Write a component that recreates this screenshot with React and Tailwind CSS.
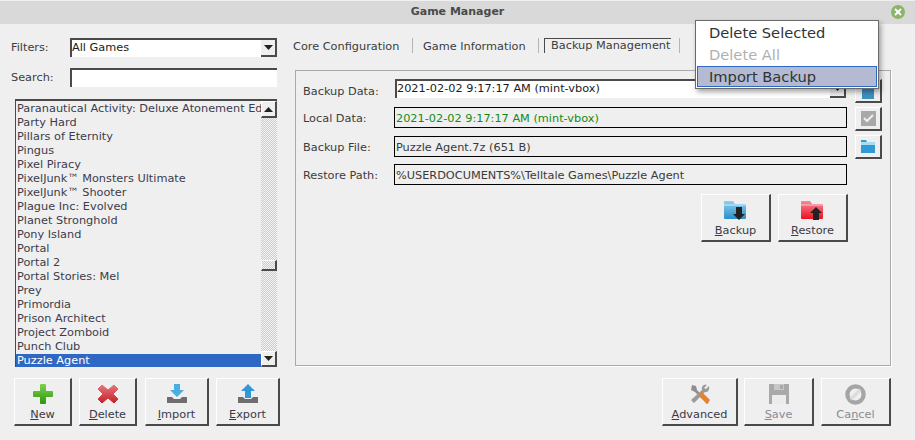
import { Fragment } from "react";

const games = [
  "Paranautical Activity: Deluxe Atonement Edition",
  "Party Hard",
  "Pillars of Eternity",
  "Pingus",
  "Pixel Piracy",
  "PixelJunk™ Monsters Ultimate",
  "PixelJunk™ Shooter",
  "Plague Inc: Evolved",
  "Planet Stronghold",
  "Pony Island",
  "Portal",
  "Portal 2",
  "Portal Stories: Mel",
  "Prey",
  "Primordia",
  "Prison Architect",
  "Project Zomboid",
  "Punch Club",
  "Puzzle Agent",
];

const bevel = "border-t border-l border-t-white border-l-white border-b-2 border-r-2 border-b-[#4a4a4a] border-r-[#4a4a4a]";

function Arrow({ up }) {
  return (
    <svg width="9" height="5" viewBox="0 0 9 5">
      <path d={up ? "M4.5 0L9 5H0z" : "M0 0H9L4.5 5z"} fill="#222" />
    </svg>
  );
}

function Folder({ id, from, to, tab, children }) {
  return (
    <svg width="23" height="21" viewBox="0 0 23 21">
      <defs>
        <linearGradient id={id} x1="0" y1="0" x2="0" y2="1">
          <stop offset="0" stopColor={from} />
          <stop offset="1" stopColor={to} />
        </linearGradient>
      </defs>
      <path d="M1 1h8l2 3h10a1 1 0 0 1 1 1v13a1 1 0 0 1-1 1H1a1 1 0 0 1-1-1V2a1 1 0 0 1 1-1z" fill={`url(#${id})`} />
      <path d="M0 5h22" stroke={tab} strokeWidth="1" />
      {children}
    </svg>
  );
}

const icons = {
  New: (
    <svg width="20" height="20" viewBox="0 0 20 20">
      <defs>
        <linearGradient id="plus" x1="0" y1="0" x2="0" y2="1">
          <stop offset="0" stopColor="#7fd04f" />
          <stop offset="1" stopColor="#2c980c" />
        </linearGradient>
      </defs>
      <path d="M7 1a1 1 0 0 1 1-1h4a1 1 0 0 1 1 1v6h6a1 1 0 0 1 1 1v4a1 1 0 0 1-1 1h-6v6a1 1 0 0 1-1 1H8a1 1 0 0 1-1-1v-6H1a1 1 0 0 1-1-1V8a1 1 0 0 1 1-1h6z" fill="url(#plus)" />
    </svg>
  ),
  Delete: (
    <svg width="20" height="20" viewBox="0 0 20 20">
      <defs>
        <linearGradient id="cross" x1="0" y1="0" x2="0" y2="1">
          <stop offset="0" stopColor="#e8747c" />
          <stop offset="1" stopColor="#c0242a" />
        </linearGradient>
      </defs>
      <path d="M4 1l6 5 6-5 4 4-5 5 5 5-4 4-6-5-6 5-4-4 5-5-5-5z" fill="url(#cross)" stroke="url(#cross)" strokeLinejoin="round" />
    </svg>
  ),
  Import: (
    <svg width="20" height="20" viewBox="0 0 20 20">
      <path d="M0 13h5l2 2h6l2-2h5v6H0z" fill="#6e6e6e" />
      <path d="M7 0h6v6h4l-7 7-7-7h4z" fill="#4aaee0" />
    </svg>
  ),
  Export: (
    <svg width="20" height="20" viewBox="0 0 20 20">
      <path d="M0 13h5l2 2h6l2-2h5v6H0z" fill="#6e6e6e" />
      <path d="M10 0l7 7h-4v7H7V7H3z" fill="#3098d8" />
    </svg>
  ),
  Advanced: (
    <svg width="22" height="22" viewBox="0 0 22 22">
      <path d="M3 2l4 1 1 4 12 12-2 2L6 9 2 7z" fill="#8f8f8f" />
      <path d="M20 3l-3 3-2-1 3-3c-3-1-6 1-5 5L2 17l3 3L16 9c3 1 5-3 4-6z" fill="#9a9a9a" />
      <path d="M10 12l3-3 8 8-3 4z" fill="#e8822a" />
    </svg>
  ),
  Save: (
    <svg width="20" height="20" viewBox="0 0 20 20">
      <path d="M0 0h20v20H0z" fill="#a9a9a9" />
      <path d="M3 11h14v9H3z" fill="#ececec" />
      <path d="M5 0h10v6H5z" fill="#c8c8c8" />
      <path d="M11 1h3v4h-3z" fill="#a9a9a9" />
    </svg>
  ),
  Cancel: (
    <svg width="21" height="21" viewBox="0 0 22 22">
      <circle cx="11" cy="11" r="8.5" fill="none" stroke="#a5a5a5" strokeWidth="4.5" />
      <path d="M6 16L16 6" stroke="#dcdcdc" strokeWidth="3.5" />
    </svg>
  ),
  Backup: (
    <Folder id="bk" from="#8fd0ee" to="#2a8ecb" tab="#cdeaf8">
      <path d="M12 7h6v7h3l-6 6-6-6h3z" fill="#222" />
    </Folder>
  ),
  Restore: (
    <Folder id="rs" from="#f58a9a" to="#ee1020" tab="#fbc8d0">
      <path d="M15 7l6 6h-3v7h-6v-7H9z" fill="#222" />
    </Folder>
  ),
};

function Btn({ name, w, disabled }) {
  return (
    <button className={`${bevel} ${w} h-[48px] flex flex-col items-center justify-start pt-[3px] shrink-0`}>
      <span className="h-[24px] flex items-center justify-center">{icons[name]}</span>
      <span className={`leading-[14px] mt-[2px] ${disabled ? "text-[#8a8a94]" : "text-[#3a3a48]"}`}>
        {name === "Cancel" ? (
          <Fragment>Ca<span className="underline">n</span>cel</Fragment>
        ) : (
          <Fragment><span className="underline">{name[0]}</span>{name.slice(1)}</Fragment>
        )}
      </span>
    </button>
  );
}

function SmallBtn({ children }) {
  return <div className={`${bevel} w-[27px] h-[24px] flex items-center justify-center shrink-0`}>{children}</div>;
}

function Field({ label, green, value }) {
  return (
    <Fragment>
      <span className="w-[91px] pt-[3px] leading-[18px] text-[#3c3c3c]">{label}</span>
      <div className={`w-[453px] h-[21px] border border-black pl-[1px] leading-[21px] truncate ${green ? "text-[#148a14]" : "text-[#3a3a3a]"}`}>
        {value}
      </div>
    </Fragment>
  );
}

function Scrollbar() {
  return (
    <div className="w-[16px] flex flex-col shrink-0 bg-[repeating-conic-gradient(#cccccc_0%_25%,#f4f4f4_0%_50%)] bg-[length:2px_2px]">
      <div className={`${bevel} h-[17px] bg-[#efefef] flex items-center justify-center`}><Arrow up /></div>
      <div className="h-[142px]" />
      <div className={`${bevel} h-[11px]`} />
      <div className="flex-1" />
      <div className={`${bevel} h-[16px] bg-[#efefef] flex items-center justify-center`}><Arrow /></div>
    </div>
  );
}

export default function App() {
  return (
    <div className="relative w-[915px] h-[440px] overflow-hidden bg-[#efefef] text-[11.3px] text-[#3c3c3c] font-['DejaVu_Sans',sans-serif]">
      <div className="relative h-[24px] bg-[#d9d9d9] border-t border-t-[#f0f0f0] flex items-center justify-center">
        <span className="text-[11px] font-bold text-[#4a4a4a]">Game Manager</span>
        <span className="absolute left-[891px] top-[4px] w-[14px] h-[14px] rounded-full bg-[#8ab56b] flex items-center justify-center">
          <svg width="8" height="8" viewBox="0 0 8 8">
            <path d="M1 1l6 6M7 1L1 7" stroke="#fff" strokeWidth="1.8" />
          </svg>
        </span>
      </div>

      <div className="flex h-[416px]">
        {/* left column */}
        <div className="w-[293px] pl-[11px] pt-[14px] flex flex-col shrink-0">
          <div className="flex items-center h-[19px]">
            <span className="w-[59px] pt-[1px]">Filters:</span>
            <div className="w-[207px] h-[19px] bg-white border-t-2 border-l-2 border-[#4a4a4a] flex justify-between">
              <span className="text-[#1c1c1c] leading-[16px]">All Games</span>
              <div className="w-[16px] h-[17px] bg-[#efefef] border-r-2 border-b-2 border-[#4a4a4a] flex items-center justify-center"><Arrow /></div>
            </div>
          </div>
          <div className="flex items-center h-[19px] mt-[11px]">
            <span className="w-[59px] pt-[1px]">Search:</span>
            <div className="w-[207px] h-[19px] bg-white border-t-2 border-l-2 border-[#4a4a4a]" />
          </div>
          <div className="ml-[4px] mt-[12px] w-[262px] h-[268px] flex border-t-2 border-l border-[#4a4a4a] bg-[#efefef]">
            <div className="flex-1 min-w-0 overflow-hidden pt-[1px]">
              {games.map((g) => (
                <div
                  key={g}
                  className={`h-[14px] leading-[14px] whitespace-nowrap pl-[1px] ${g === "Puzzle Agent" ? "bg-[#2f67c4] text-white" : "text-[#3c3c4c]"}`}
                >
                  {g}
                </div>
              ))}
            </div>
            <Scrollbar />
          </div>
          <div className="flex mt-[11px] ml-[3px]">
            <Btn name="New" w="w-[58px]" />
            <div className="ml-[7px]"><Btn name="Delete" w="w-[58px]" /></div>
            <div className="ml-[8px]"><Btn name="Import" w="w-[64px]" /></div>
            <div className="ml-[7px]"><Btn name="Export" w="w-[64px]" /></div>
          </div>
        </div>

        {/* right column */}
        <div className="flex-1 pt-[14px] flex flex-col min-w-0">
          <div className="flex items-center h-[15px] text-[#3c3c3c]">
            <span className="w-[119px] pt-[3px]">Core Configuration</span>
            <span className="w-px h-[15px] bg-[#b4b4b4]" />
            <span className="ml-[10px] w-[115px] pt-[3px]">Game Information</span>
            <span className="w-px h-[15px] bg-[#b4b4b4]" />
            <span className="ml-[5px] w-[127px] h-[15px] border-t border-l border-[#4a4a4a] pl-[6px] leading-[13px] whitespace-nowrap">Backup Management</span>
            <span className="ml-[8px] w-px h-[15px] bg-[#b4b4b4]" />
          </div>

          <div className="mt-[17px] ml-[2px] w-[596px] h-[296px] border border-[#aaaaaa] shadow-[1px_1px_0_#ffffff] pl-[7px] pt-[8px] flex flex-col shrink-0">
            <div className="flex h-[24px]">
              <span className="w-[92px] pt-[5px] text-[#3c3c3c]">Backup Data:</span>
              <div className="w-[451px] h-[19px] bg-white border-t-2 border-l-2 border-[#4a4a4a] flex justify-between">
                <span className="text-[#1c1c1c]">2021-02-02 9:17:17 AM (mint-vbox)</span>
                <div className="w-[16px] h-[17px] bg-[#efefef] border-r-2 border-b-2 border-[#4a4a4a] flex items-center justify-center"><Arrow /></div>
              </div>
              <div className="ml-[9px]">
                <SmallBtn><span className="w-[12px] h-[16px] bg-[#3f8fbf]" /></SmallBtn>
              </div>
            </div>

            <div className="flex h-[21px] mt-[4px]">
              <Field label="Local Data:" green value="2021-02-02 9:17:17 AM (mint-vbox)" />
              <div className="ml-[8px]">
                <SmallBtn>
                  <span className="w-[15px] h-[15px] bg-[#a8a8a8] flex items-center justify-center">
                    <svg width="11" height="9" viewBox="0 0 11 9"><path d="M1 4l3 3 6-6" stroke="#eee" strokeWidth="2.2" fill="none" /></svg>
                  </span>
                </SmallBtn>
              </div>
            </div>

            <div className="flex h-[21px] mt-[8px]">
              <Field label="Backup File:" value="Puzzle Agent.7z (651 B)" />
              <div className="ml-[8px] -mt-[1px]">
                <SmallBtn>
                  <svg width="16" height="13" viewBox="0 0 16 13"><path d="M1 0h5l1 2h8v11H1z" fill="#2f9ad6" /><path d="M1 2h14v3H1z" fill="#a8dcf2" /></svg>
                </SmallBtn>
              </div>
            </div>

            <div className="flex h-[21px] mt-[7px]">
              <Field label="Restore Path:" value="%USERDOCUMENTS%\Telltale Games\Puzzle Agent" />
            </div>

            <div className="flex mt-[9px] ml-[398px]">
              <Btn name="Backup" w="w-[70px]" />
              <div className="ml-[7px]"><Btn name="Restore" w="w-[70px]" /></div>
            </div>
          </div>

          <div className="flex mt-[12px] ml-[369px]">
            <Btn name="Advanced" w="w-[76px]" />
            <div className="ml-[6px]"><Btn name="Save" w="w-[70px]" disabled /></div>
            <div className="ml-[7px]"><Btn name="Cancel" w="w-[70px]" disabled /></div>
          </div>
        </div>
      </div>

      {/* popup menu */}
      <div className="absolute left-[695px] top-[20px] w-[184px] h-[69px] bg-white border border-[#6a6a6a] shadow-[2px_3px_5px_rgba(0,0,0,0.35)] text-[14.67px] p-px flex flex-col">
        <div className="h-[22px] leading-[22px] pl-[12px] text-[#2e3436]">Delete Selected</div>
        <div className="h-[22px] leading-[22px] pl-[12px] text-[#b0b0b0]">Delete All</div>
        <div className="h-[22px] leading-[19px] pl-[11px] bg-[#b3bad2] border border-[#2f67c4] text-[#2e3436]">Import Backup</div>
      </div>
    </div>
  );
}
